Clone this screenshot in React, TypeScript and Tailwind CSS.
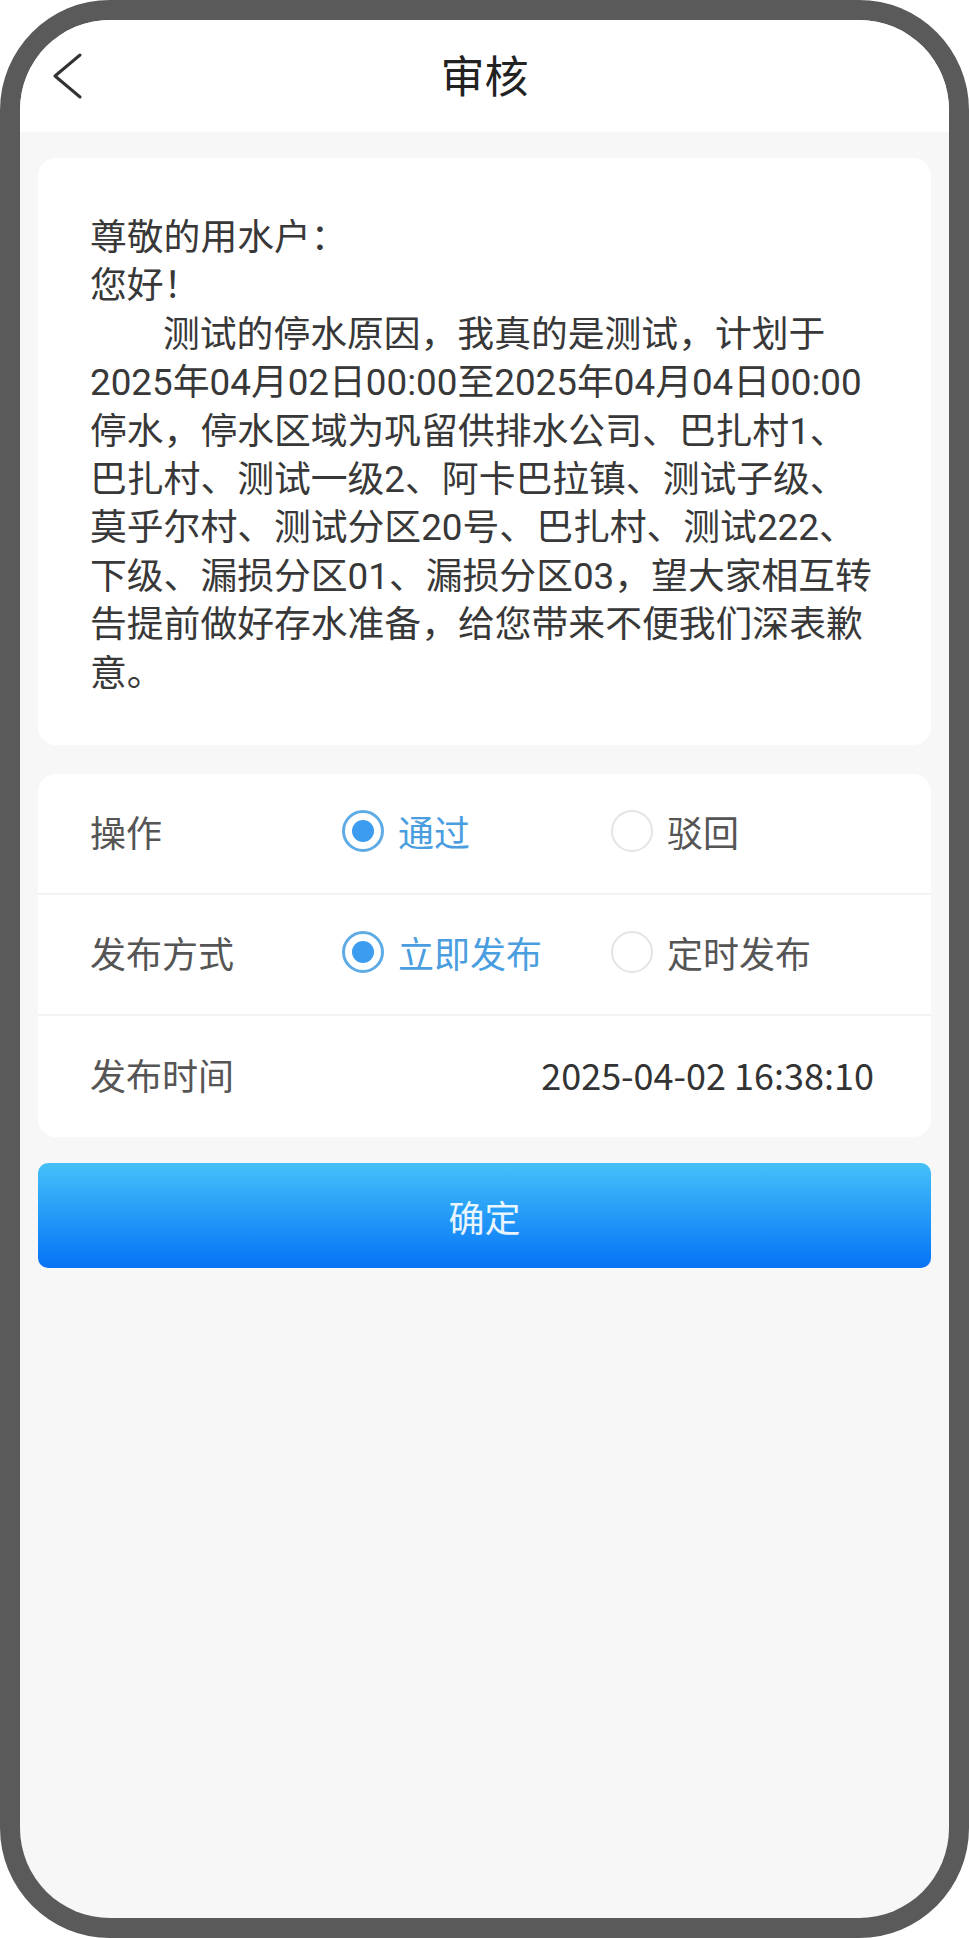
import React, { useState } from "react"

const font = { fontFamily: '"Noto Sans CJK SC", "Noto Sans", sans-serif' }
const noticeFont = { fontFamily: 'Roboto, "Noto Sans CJK SC", sans-serif' }

const noticeLines = [
  "测试的停水原因，我真的是测试，计划于",
  "2025年04月02日00:00至2025年04月04日00:00",
  "停水，停水区域为巩留供排水公司、巴扎村1、",
  "巴扎村、测试一级2、阿卡巴拉镇、测试子级、",
  "莫乎尔村、测试分区20号、巴扎村、测试222、",
  "下级、漏损分区01、漏损分区03，望大家相互转",
  "告提前做好存水准备，给您带来不便我们深表歉",
  "意。",
]

function Radio({ checked, label, onClick }: { checked: boolean; label: string; onClick: () => void }) {
  return (
    <button type="button" onClick={onClick} className="flex items-center gap-[14px]">
      {checked ? (
        <span className="flex h-[42px] w-[42px] items-center justify-center rounded-full border-[3px] border-[#5eabe6]">
          <span className="h-[22px] w-[22px] rounded-full bg-[#3c9cf0]" />
        </span>
      ) : (
        <span className="h-[42px] w-[42px] rounded-full border-2 border-[#e4e4e4]" />
      )}
      <span className={`text-[36px] ${checked ? "text-[#4a9ee0]" : "text-[#555555]"}`}>{label}</span>
    </button>
  )
}

function Row({ label, children, last }: { label: string; children: React.ReactNode; last?: boolean }) {
  return (
    <div className={`flex h-[121px] items-center pb-[5px] pl-[52px] pr-[57px] ${last ? "" : "border-b-2 border-[#f3f3f3]"}`}>
      <div className="w-[252px] shrink-0 text-[36px] text-[#555555]">{label}</div>
      {children}
    </div>
  )
}

export default function App() {
  const [action, setAction] = useState("pass")
  const [mode, setMode] = useState("now")

  return (
    <div className="h-[1938px] w-[969px] bg-white" style={font}>
      <div className="h-full w-full rounded-[110px] bg-[#5a5a5a] p-[20px]">
        <div className="flex h-full flex-col overflow-hidden rounded-[90px] bg-[#f7f7f7]">
          {/* header */}
          <div className="relative flex h-[112px] shrink-0 items-center justify-center bg-white">
            <button type="button" className="absolute left-[30px] top-[33px] flex h-[46px] w-[34px] items-center justify-center">
              <svg width="30" height="46" viewBox="0 0 30 46" fill="none">
                <path d="M28 2 L3 23 L28 44" stroke="#333333" strokeWidth="3" strokeLinecap="round" strokeLinejoin="round" />
              </svg>
            </button>
            <h1 className="mt-[-4px] text-[44px] font-normal leading-none text-[#222222]">审核</h1>
          </div>

          <div className="flex flex-col px-[18px] pt-[26px]">
            {/* notice */}
            <div className="rounded-[18px] bg-white pl-[52px] pr-[20px] pt-[56px] pb-[47px]">
              <div className="text-[36.8px] leading-[48.4px] text-[#383838]" style={noticeFont}>
                <div>尊敬的用水户：</div>
                <div>您好！</div>
                {noticeLines.map((line, i) => (
                  <div key={i} className={`whitespace-nowrap ${i === 0 ? "pl-[73px]" : ""}`}>
                    {line}
                  </div>
                ))}
              </div>
            </div>

            {/* form */}
            <div className="mt-[29px] rounded-[18px] bg-white">
              <Row label="操作">
                <div className="flex items-center gap-[50px]">
                  <div className="w-[219px]">
                    <Radio checked={action === "pass"} label="通过" onClick={() => setAction("pass")} />
                  </div>
                  <Radio checked={action === "reject"} label="驳回" onClick={() => setAction("reject")} />
                </div>
              </Row>
              <Row label="发布方式">
                <div className="flex items-center gap-[50px]">
                  <div className="w-[219px]">
                    <Radio checked={mode === "now"} label="立即发布" onClick={() => setMode("now")} />
                  </div>
                  <Radio checked={mode === "timed"} label="定时发布" onClick={() => setMode("timed")} />
                </div>
              </Row>
              <Row label="发布时间" last>
                <div className="ml-auto text-[36px] text-[#333333]">2025-04-02 16:38:10</div>
              </Row>
            </div>

            {/* submit */}
            <button
              type="button"
              className="mt-[26px] flex h-[105px] items-center justify-center rounded-[10px] bg-gradient-to-b from-[#45c0f8] to-[#0872f6] text-[36px] text-white/90"
            >
              确定
            </button>
          </div>
        </div>
      </div>
    </div>
  )
}
